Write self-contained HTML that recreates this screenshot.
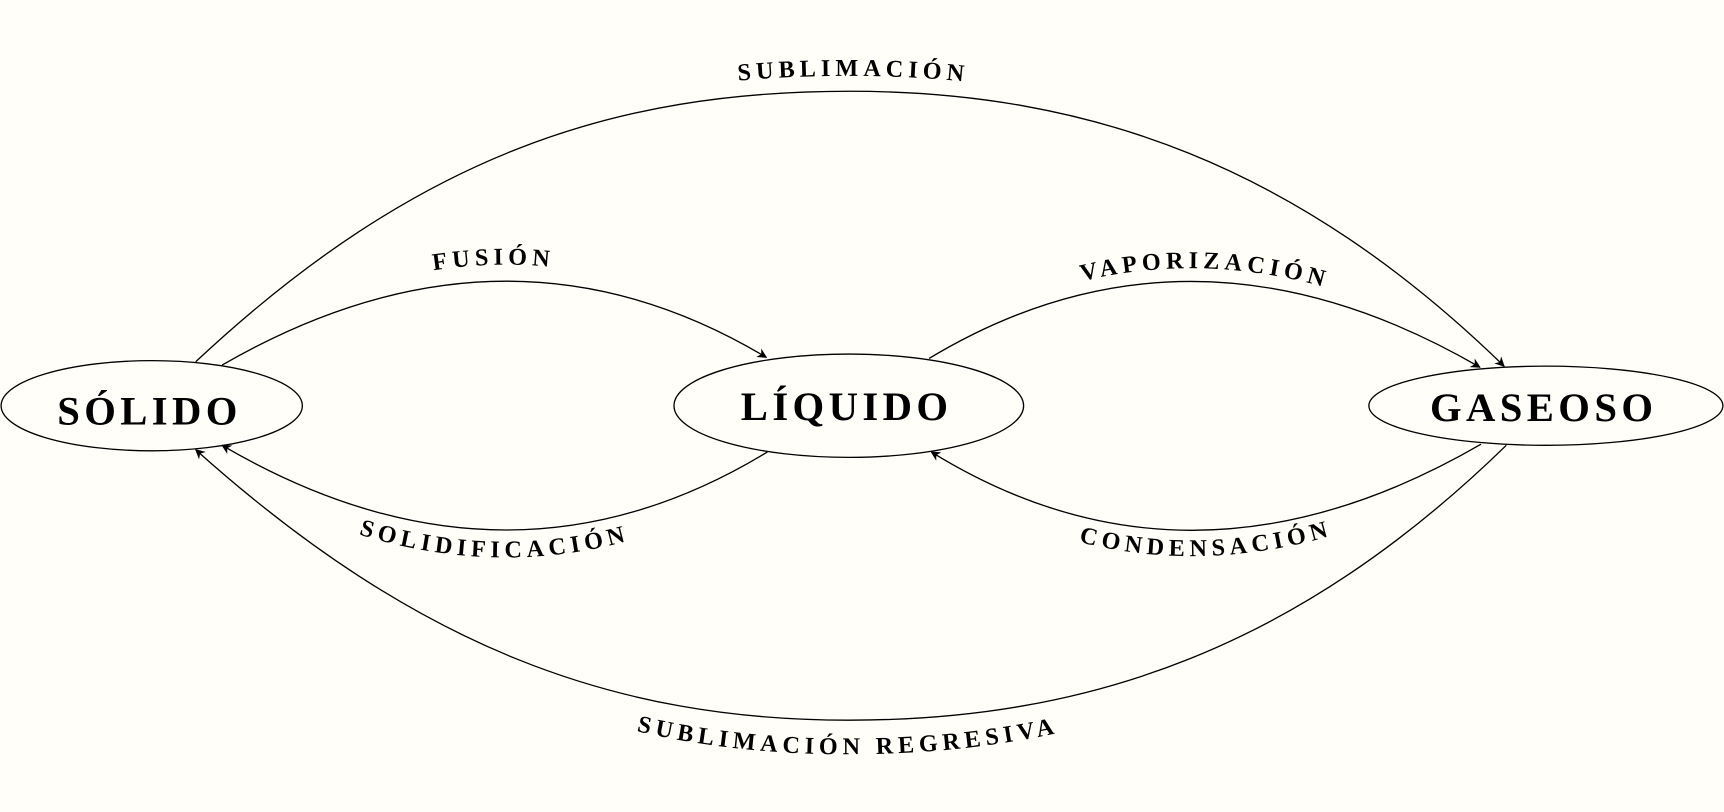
<!DOCTYPE html>
<html><head><meta charset="utf-8"><style>
html,body{margin:0;padding:0;background:#fffef8;}
svg{display:block;}
text{font-family:"Liberation Serif",serif;font-weight:bold;fill:#000;}
.l{font-size:22px;letter-spacing:4.5px;}
.n{font-size:37px;letter-spacing:4px;}
</style></head><body>
<svg width="1724" height="812" viewBox="0 0 1568 738.5" xmlns="http://www.w3.org/2000/svg">
<defs>
<marker id="a" viewBox="0 0 10 10" refX="9" refY="5" markerWidth="9" markerHeight="9" markerUnits="userSpaceOnUse" orient="auto">
<path d="M0,0 L10,5 L0,10 L3,5 Z" fill="#000"/></marker>
<path id="p1" d="M160,312 C370,120 560,69 773,69 C990,69 1190,130 1390,318"/>
<path id="p2" d="M202,317 Q460,168 697,310"/>
<path id="p3" d="M845,314 Q1084,170 1346,322"/>
<path id="p4" d="M202,430 Q460,581 698,436"/>
<path id="p5" d="M847,435 Q1083,580 1347,428"/>
<path id="p6" d="M150,420 C370,620 560,686 770,686 C990,686 1190,620 1390,420"/>
</defs>
<rect width="1568" height="739" fill="#fffef8"/>
<g fill="none" stroke="#000" stroke-width="1.2">
<ellipse cx="138" cy="369" rx="137" ry="41"/>
<ellipse cx="772" cy="369" rx="159" ry="47"/>
<ellipse cx="1406" cy="369" rx="161" ry="36"/>
<path d="M178,329 C380,140 560,83 773,83 C990,83 1180,150 1368,333" marker-end="url(#a)"/>
<path d="M202,332 Q460,183 697,325" marker-end="url(#a)"/>
<path d="M845,326 Q1084,182 1346,334" marker-end="url(#a)"/>
<path d="M698,411 Q460,556 202,405" marker-end="url(#a)"/>
<path d="M1347,404 Q1083,557 847,411" marker-end="url(#a)"/>
<path d="M1370,405 C1180,590 990,655 772,655 C560,655 380,590 178,409" marker-end="url(#a)"/>
</g>
<text class="n" x="136" y="386" text-anchor="middle">SÓLIDO</text>
<text class="n" x="770" y="382" text-anchor="middle">LÍQUIDO</text>
<text class="n" x="1404" y="383" text-anchor="middle">GASEOSO</text>
<text class="l"><textPath href="#p1" startOffset="50%" text-anchor="middle">SUBLIMACIÓN</textPath></text>
<text class="l"><textPath href="#p2" startOffset="50%" text-anchor="middle">FUSIÓN</textPath></text>
<text class="l"><textPath href="#p3" startOffset="50%" text-anchor="middle">VAPORIZACIÓN</textPath></text>
<text class="l"><textPath href="#p4" startOffset="50%" text-anchor="middle">SOLIDIFICACIÓN</textPath></text>
<text class="l"><textPath href="#p5" startOffset="50%" text-anchor="middle">CONDENSACIÓN</textPath></text>
<text class="l"><textPath href="#p6" startOffset="50%" text-anchor="middle">SUBLIMACIÓN REGRESIVA</textPath></text>
</svg>
</body></html>
